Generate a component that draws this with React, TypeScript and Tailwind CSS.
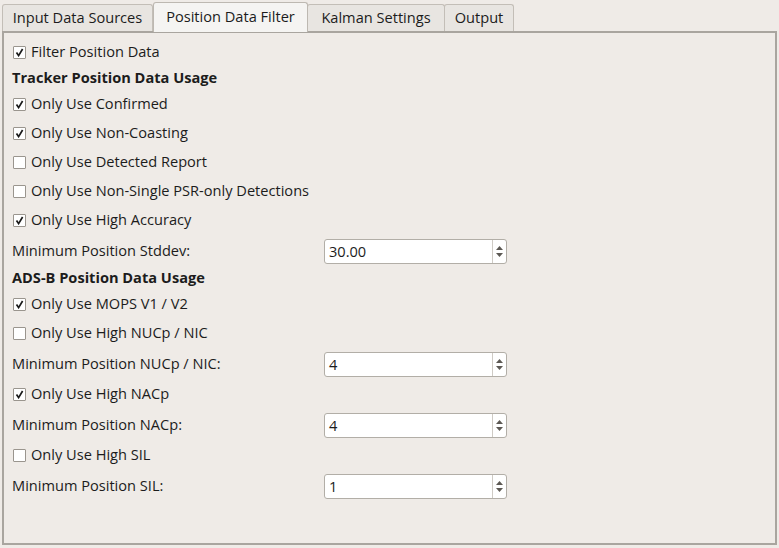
import React from "react";

type Row =
  | { kind: "check"; label: string; checked: boolean; mt: number }
  | { kind: "heading"; label: string; mt: number }
  | { kind: "spin"; label: string; value: string; mt: number };

const rows: Row[] = [
  { kind: "check", label: "Filter Position Data", checked: true, mt: 0 },
  { kind: "heading", label: "Tracker Position Data Usage", mt: 2 },
  { kind: "check", label: "Only Use Confirmed", checked: true, mt: 2 },
  { kind: "check", label: "Only Use Non-Coasting", checked: true, mt: 5 },
  { kind: "check", label: "Only Use Detected Report", checked: false, mt: 5 },
  { kind: "check", label: "Only Use Non-Single PSR-only Detections", checked: false, mt: 5 },
  { kind: "check", label: "Only Use High Accuracy", checked: true, mt: 5 },
  { kind: "spin", label: "Minimum Position Stddev:", value: "30.00", mt: 7 },
  { kind: "heading", label: "ADS-B Position Data Usage", mt: 3 },
  { kind: "check", label: "Only Use MOPS V1 / V2", checked: true, mt: 2 },
  { kind: "check", label: "Only Use High NUCp / NIC", checked: false, mt: 5 },
  { kind: "spin", label: "Minimum Position NUCp / NIC:", value: "4", mt: 7 },
  { kind: "check", label: "Only Use High NACp", checked: true, mt: 6 },
  { kind: "spin", label: "Minimum Position NACp:", value: "4", mt: 7 },
  { kind: "check", label: "Only Use High SIL", checked: false, mt: 6 },
  { kind: "spin", label: "Minimum Position SIL:", value: "1", mt: 7 },
];

const tabs = [
  { label: "Input Data Sources", w: "w-[151px]", active: false },
  { label: "Position Data Filter", w: "w-[155px]", active: true },
  { label: "Kalman Settings", w: "w-[138px]", active: false },
  { label: "Output", w: "w-[70px]", active: false },
];

function CheckBox({ checked }: { checked: boolean }) {
  return (
    <span className="flex h-[13px] w-[13px] items-center justify-center rounded-[1px] border border-[#9a958e] bg-white">
      {checked && (
        <svg width="9" height="9" viewBox="0 0 9 9">
          <path d="M1.5 4.6 L3.6 7.6 L7.6 1" fill="none" stroke="#1a1a1a" strokeWidth="1.7" />
        </svg>
      )}
    </span>
  );
}

function SpinBox({ value }: { value: string }) {
  return (
    <div className="ml-auto mr-[268px] flex h-[25px] w-[183px] items-stretch rounded-[3px] border border-[#b2aea7] bg-white">
      <span className="flex-1 pl-[4px] leading-[23px]">{value}</span>
      <div className="flex w-[14px] flex-col items-center justify-center gap-[3px] border-l border-[#cfcbc5]">
        <svg width="7" height="4" viewBox="0 0 7 4">
          <path d="M0 4 L3.5 0 L7 4 Z" fill="#5c5853" />
        </svg>
        <svg width="7" height="4" viewBox="0 0 7 4">
          <path d="M0 0 L3.5 4 L7 0 Z" fill="#5c5853" />
        </svg>
      </div>
    </div>
  );
}

export default function App() {
  return (
    <div
      className="h-[548px] w-[779px] overflow-hidden bg-[#efebe7] text-[14.6px] text-[#1c1c1c]"
      style={{ fontFamily: '"Open Sans", "DejaVu Sans", sans-serif' }}
    >
      <div className="flex h-[31px] items-end pl-[2px]">
        {tabs.map((t) =>
          t.active ? (
            <div
              key={t.label}
              className={`${t.w} relative -mb-px flex h-[30px] items-center justify-center rounded-t-[3px] border border-b-0 border-[#bdb8b1] bg-[#f5f4f2] pb-[1px]`}
            >
              {t.label}
            </div>
          ) : (
            <div
              key={t.label}
              className={`${t.w} -ml-px flex h-[27px] items-center justify-center rounded-t-[3px] border border-b-0 border-[#c3beb7] bg-[#e8e5e1] first:ml-0`}
            >
              {t.label}
            </div>
          )
        )}
      </div>
      <div className="mx-[2px] h-[514px] border-[2px] border-double border-[#a9a59f] bg-[#efebe7] pt-[7px] pl-[8px]">
        {rows.map((r, i) => (
          <div key={i} className="flex h-[24px] items-center" style={{ marginTop: r.mt }}>
            {r.kind === "check" && (
              <>
                <span className="ml-[1px]">
                  <CheckBox checked={r.checked} />
                </span>
                <span className="ml-[5px]">{r.label}</span>
              </>
            )}
            {r.kind === "heading" && <span className="font-bold">{r.label}</span>}
            {r.kind === "spin" && (
              <>
                <span>{r.label}</span>
                <SpinBox value={r.value} />
              </>
            )}
          </div>
        ))}
      </div>
    </div>
  );
}
